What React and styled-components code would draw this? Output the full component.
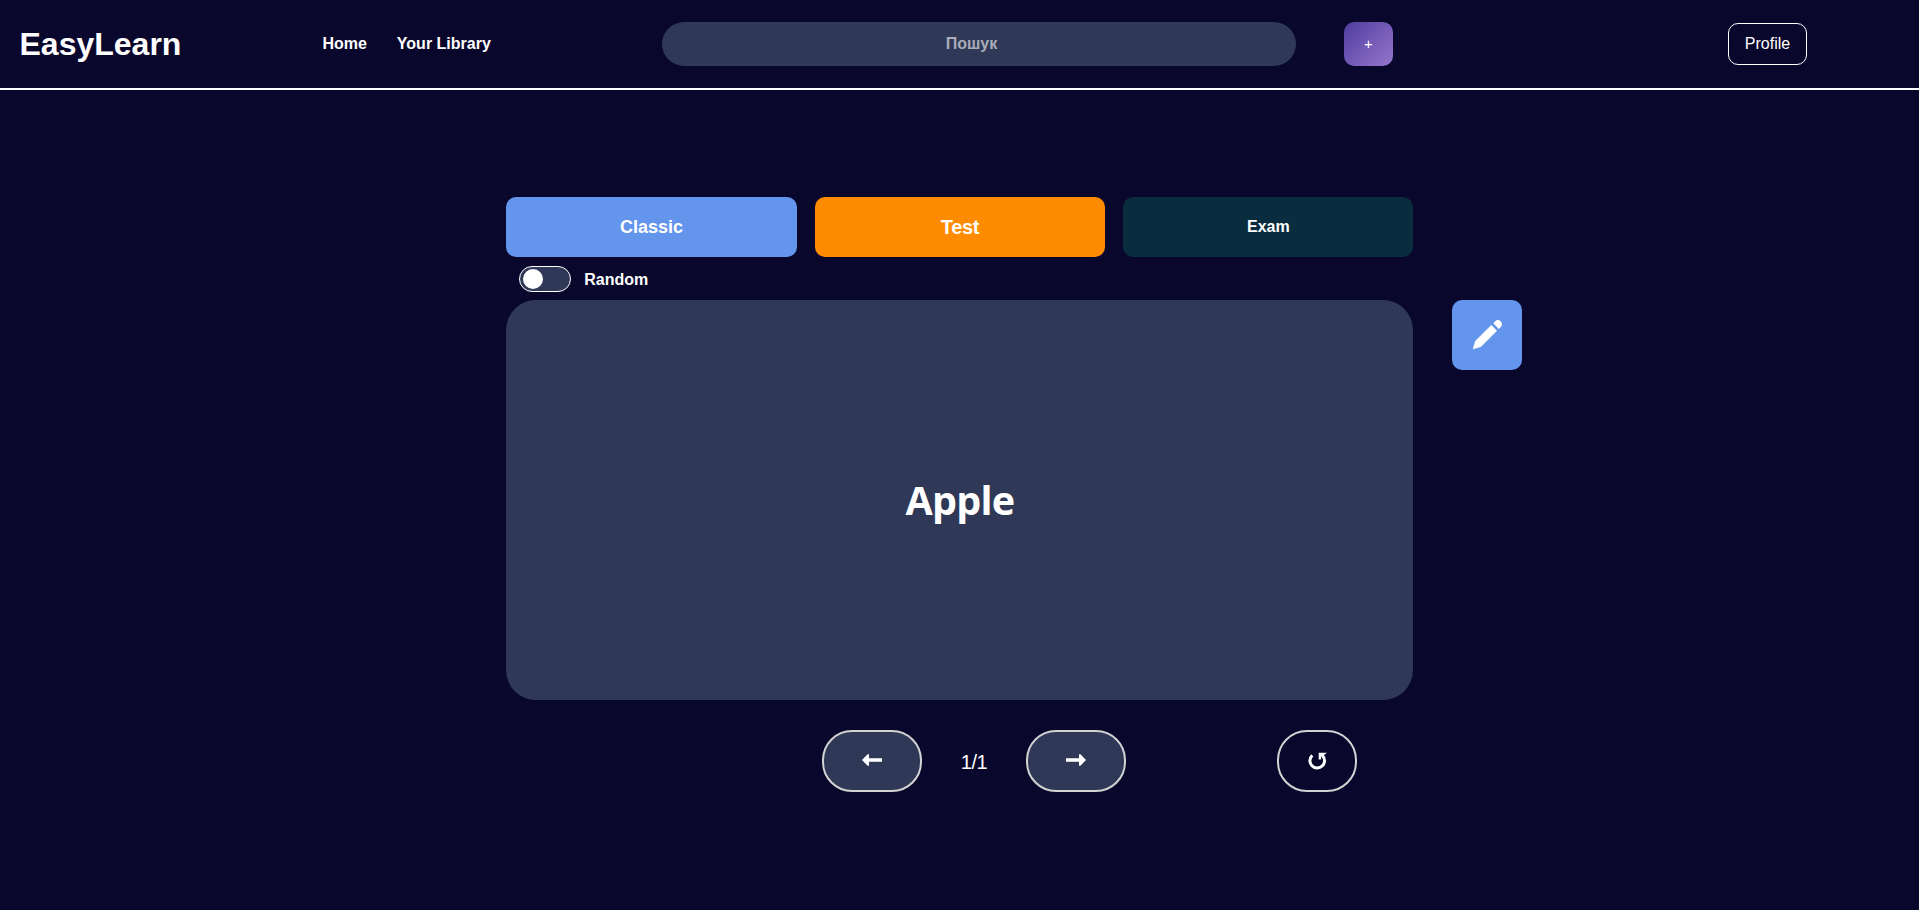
import React from "react";
import styled, { createGlobalStyle } from "styled-components";

const GlobalStyle = createGlobalStyle`
  * { box-sizing: border-box; }
  body {
    margin: 0;
    background: #09072b;
    color: #fff;
    font-family: "Liberation Sans", Arial, sans-serif;
  }
  button, input { font-family: inherit; color: inherit; }
`;

const Header = styled.header`
  display: flex;
  align-items: center;
  height: 90px;
  padding: 0 112px 0 19.5px;
  border-bottom: 2px solid #fff;
`;

const Logo = styled.div`
  width: 302.9px;
  font-size: 32px;
  font-weight: 700;
`;

const Nav = styled.nav`
  display: flex;
  gap: 30px;
  width: 339.6px;
`;

const NavLink = styled.a`
  font-size: 16px;
  font-weight: 700;
`;

const Search = styled.input`
  width: 634px;
  height: 44px;
  padding: 0 35px 0 20px;
  border: 0;
  border-radius: 22px;
  background: #2f3856;
  font-size: 16px;
  font-weight: 700;
  text-align: center;
  &::placeholder { color: #a9acb9; opacity: 1; }
`;

const AddButton = styled.button`
  width: 49px;
  height: 44px;
  margin-left: 48px;
  padding: 0 0 1px;
  border: 0;
  border-radius: 10px;
  background: linear-gradient(135deg, #4e3d9e, #9776cd);
  font-size: 15px;
`;

const ProfileButton = styled.button`
  width: 79px;
  height: 42px;
  margin-left: auto;
  padding: 0;
  border: 1px solid #fff;
  border-radius: 10px;
  background: transparent;
  font-size: 16px;
`;

const Main = styled.main`
  width: 907.2px;
  margin: 107px 0 0 506.3px;
`;

const Modes = styled.div`
  display: grid;
  grid-template-columns: repeat(3, 1fr);
  gap: 18.1px;
`;

const ModeButton = styled.button`
  height: 60px;
  padding: 0;
  border: 0;
  border-radius: 10px;
  background: ${(p) => p.$color};
  font-size: ${(p) => p.$size}px;
  font-weight: 700;
  letter-spacing: ${(p) => p.$spacing || 0}px;
`;

const RandomRow = styled.label`
  display: flex;
  align-items: center;
  gap: 13px;
  height: 43px;
  padding: 1px 0 0 13px;
  font-size: 16px;
  font-weight: 700;
`;

const RandomText = styled.span`
  padding-top: 1px;
`;

const Toggle = styled.span`
  display: flex;
  align-items: center;
  width: 52px;
  height: 26px;
  padding-left: 3px;
  border: 1px solid #fff;
  border-radius: 13px;
  background: #2f3856;
`;

const Knob = styled.span`
  width: 20px;
  height: 20px;
  border-radius: 50%;
  background: #fff;
`;

const CardRow = styled.div`
  display: flex;
  align-items: flex-start;
  gap: 38.5px;
  width: max-content;
`;

const Card = styled.section`
  display: flex;
  align-items: center;
  justify-content: center;
  width: 907.2px;
  height: 400px;
  border-radius: 30px;
  background: #2f3856;
  font-family: "Open Sans", sans-serif;
  font-size: 39.5px;
  font-weight: 700;
  letter-spacing: -0.8px;
`;

const EditButton = styled.button`
  display: flex;
  width: 70px;
  height: 70px;
  padding: 0;
  border: 0;
  border-radius: 10px;
  background: #6495ed;
`;

const Controls = styled.div`
  display: flex;
  align-items: center;
  margin: 30px 0 0 315.7px;
`;

const PillButton = styled.button`
  display: flex;
  align-items: center;
  justify-content: center;
  width: ${(p) => p.$width}px;
  height: 62px;
  margin-left: ${(p) => p.$offset || 0}px;
  padding: 0 0 ${(p) => p.$lift || 0}px;
  border: 2px solid #d3d3d3;
  border-radius: 30px;
  background: ${(p) => p.$fill || "transparent"};
`;

const Counter = styled.span`
  width: 104px;
  padding-top: 2px;
  text-align: center;
  font-size: 20px;
  letter-spacing: -0.5px;
`;

const ArrowSvg = styled.svg`
  transform: ${(p) => (p.$flip ? "scaleX(-1)" : "none")};
`;

const Arrow = ({ flip }) => (
  <ArrowSvg $flip={flip} width="20" height="12" viewBox="0 0 20 12" fill="#fff">
    <path d="M0 6 L5.6 0.2 H7 V4.3 H20 V7.7 H7 V11.8 H5.6 Z" />
  </ArrowSvg>
);

const Pencil = () => (
  <svg width="70" height="70" viewBox="0 0 70 70" fill="#fff">
    <path d="M21 49 L23.4 41 L39.3 25.2 L44.8 30.8 L28.8 46.8 Z" stroke="#fff" strokeWidth="0.4" strokeLinejoin="round" />
    <path d="M41.3 23.3 L43.2 21.2 C45 19.5 47.2 19.8 48.6 21.3 C50.3 23 50.5 25.2 48.9 26.9 L46.8 29 Z" />
  </svg>
);

const Restart = () => (
  <svg width="20" height="18" viewBox="0 0 20 18">
    <path d="M5.3 3.3 A7.3 7.3 0 1 0 15.5 3.6" fill="none" stroke="#fff" strokeWidth="3" />
    <path d="M11.7 0.8 H20 L16.5 3.6 L14.1 4.8 V7.4 H11.7 Z" fill="#fff" />
  </svg>
);

const modes = [
  { label: "Classic", color: "#6495ed", size: 18 },
  { label: "Test", color: "#ff8c00", size: 20, spacing: -0.4 },
  { label: "Exam", color: "#0a2c3f", size: 16 },
];

export default function App() {
  return (
    <>
      <GlobalStyle />
      <Header>
        <Logo>EasyLearn</Logo>
        <Nav>
          <NavLink>Home</NavLink>
          <NavLink>Your Library</NavLink>
        </Nav>
        <Search placeholder="Пошук" />
        <AddButton>+</AddButton>
        <ProfileButton>Profile</ProfileButton>
      </Header>
      <Main>
        <Modes>
          {modes.map((m) => (
            <ModeButton key={m.label} $color={m.color} $size={m.size} $spacing={m.spacing}>
              {m.label}
            </ModeButton>
          ))}
        </Modes>
        <RandomRow>
          <Toggle><Knob /></Toggle>
          <RandomText>Random</RandomText>
        </RandomRow>
        <CardRow>
          <Card>Apple</Card>
          <EditButton aria-label="Edit"><Pencil /></EditButton>
        </CardRow>
        <Controls>
          <PillButton $width={100} $lift={2} $fill="#2f3856" aria-label="Previous"><Arrow /></PillButton>
          <Counter>1/1</Counter>
          <PillButton $width={100} $lift={2} $fill="#2f3856" aria-label="Next"><Arrow flip /></PillButton>
          <PillButton $width={80} $offset={151} aria-label="Restart"><Restart /></PillButton>
        </Controls>
      </Main>
    </>
  );
}
